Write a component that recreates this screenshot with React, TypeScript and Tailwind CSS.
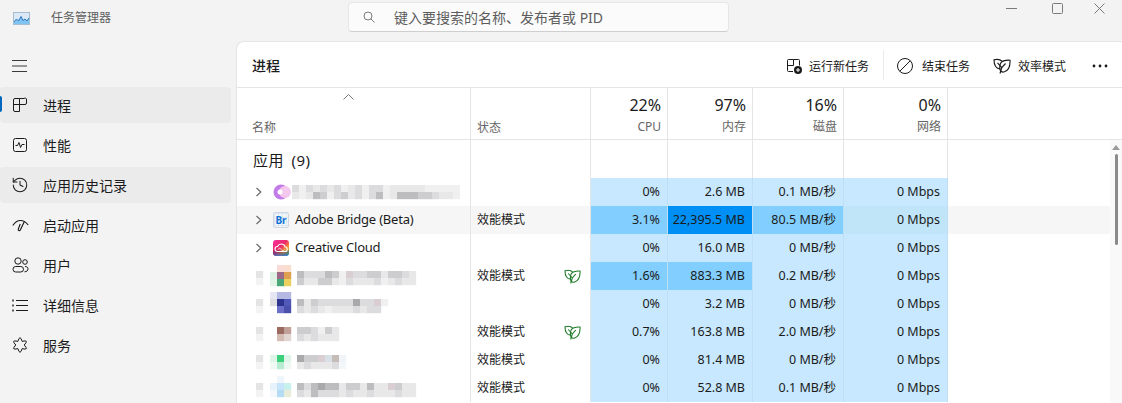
import React from "react";
import { History } from "lucide-react";

const L = "bg-[#c7e8fe]";
const M = "bg-[#82cfff]";
const H = "bg-[#0090f5]";
const N = "bg-[#c0e4f8]";

type Cell = { v: string; bg?: string };

function Leaf({ className }: { className: string }) {
  return (
    <svg viewBox="0 0 18 16" fill="none" stroke="currentColor" strokeWidth="1.150" className={className}>
      <path d="M7.500 10.800C3.200 11 1 7.500 1 1.800c3-.8 6-.8 8.200 1.600" />
      <path d="M7.600 5.200C9 3 12.500 2 17 2.200c.3 5-1 10-5.600 11.600-2.300.8-4.400-.4-4.600-3.300-.1-2 .1-3.800.8-5.300z" />
      <path d="M4.500 4.800 8.800 9.600M12.500 5.500 8.800 9.600 7 15.500" />
    </svg>
  );
}

function Cells({ x, y, rows }: { x: number; y: number; rows: string[][] }) {
  return (
    <>
      {rows.map((r, j) =>
        r.map((c, i) => (c ? <rect key={`${j}-${i}`} x={x + i * 7} y={y + j * 7} width="7.2" height="7.2" fill={c} /> : null)),
      )}
    </>
  );
}

const g1 = "#cdcdd0", g2 = "#dcdcde", g3 = "#e8e8e9", g4 = "#f0f0f1", g5 = "#bdbdc0", g6 = "#a9a9ac", p1 = "#d9cfd3", b1 = "#d8e0e6";

type Blur = { rows: { x: number; y: number; rows: string[][] }[] };

const exp = (y: number) => ({ x: 256 - 254, y, rows: [["#e4e4e4"], ["#f3f3f3"]] });

function BlurRow({ rows }: Blur) {
  return (
    <svg width="216" height="28" viewBox="0 0 216 28" className="shrink-0 blur-[0.6px]">
      {rows.map((r, i) => (
        <Cells key={i} {...r} />
      ))}
    </svg>
  );
}

const blurred: Record<string, Blur> = {
  r4: {
    rows: [
      exp(9),
      { x: 16, y: 3, rows: [["", "#f9dcd6", "#f9ded0"], ["#dff1e2", "#9c6a88", "#dfa050"], ["#e3f3e6", "#4aa878", "#ecd060"]] },
      {
        x: 43,
        y: 9,
        rows: [
          [g5, g2, g2, g2, g5, g1, g4, p1, g2, g2, g1, g1, g3, g1, g1, g2, g3],
          [g1, g3, g3, g1, g1, g3, g4, g2, g3, g3, g3, g2, g4, g3, g2, g3, g3],
        ],
      },
    ],
  },
  r5: {
    rows: [
      exp(9),
      { x: 16, y: 2, rows: [["#e6e7f5", "#b4b8e2", "#b4b8e2"], ["#dddde2", "#2c3490", "#5058b8"], ["", "#6c70c8", "#4a50ac"]] },
      {
        x: 43,
        y: 9,
        rows: [
          [g5, g3, g1, g2, g2, g2, g2, g2, g6, g2, g2, p1, g4],
          [g2, g3, g2, g3, g4, g3, g3, g3, g2, g3, g2, g2, ""],
        ],
      },
    ],
  },
  r6: {
    rows: [
      exp(9),
      { x: 23, y: 9, rows: [["#9a6a60", "#c0a098"], ["#d4bcb4", "#e2d6d2"]] },
      { x: 43, y: 9, rows: [[g1, g1, g2, g4, g1, g3], [g2, g3, g2, g3, g3, g3]] },
    ],
  },
  r7: {
    rows: [
      exp(9),
      { x: 16, y: 9, rows: [["#dff5e8", "#3dd07a", "#e0f5ea"], ["#f0f9f4", "#b8ecd0", "#eef8f2"]] },
      { x: 43, y: 9, rows: [[g6, g1, g1, p1, b1, "#c5bcb8", "#f0f4f9"], [g3, g2, g3, g3, g3, g2, "#f4f7fa"]] },
    ],
  },
  r8: {
    rows: [
      exp(9),
      { x: 16, y: 2, rows: [["", "#eef6fc", ""], ["#e6f2fc", "#c8e4fa", "#c8f0ec"], ["#f4f8fc", "#b4dcf4", "#e8ecd8"]] },
      {
        x: 43,
        y: 9,
        rows: [
          [g5, g2, g5, g6, g5, g5, g3, g1, g1, g3, g5, g3, g3, p1, g1, g3, g3],
          [g2, g3, g5, g2, g2, g2, g3, g2, g3, g3, g2, g3, g3, g3, g2, g3, g3],
        ],
      },
    ],
  },
};

const rows: {
  key: string;
  status?: string;
  leaf?: boolean;
  hover?: boolean;
  cells: Cell[];
}[] = [
  { key: "r1", cells: [{ v: "0%" }, { v: "2.6 MB" }, { v: "0.1 MB/秒" }, { v: "0 Mbps" }] },
  { key: "r2", hover: true, status: "效能模式", cells: [{ v: "3.1%", bg: M }, { v: "22,395.5 MB", bg: H }, { v: "80.5 MB/秒", bg: M }, { v: "0 Mbps", bg: N }] },
  { key: "r3", cells: [{ v: "0%" }, { v: "16.0 MB" }, { v: "0 MB/秒" }, { v: "0 Mbps" }] },
  { key: "r4", status: "效能模式", leaf: true, cells: [{ v: "1.6%", bg: M }, { v: "883.3 MB", bg: M }, { v: "0.2 MB/秒" }, { v: "0 Mbps" }] },
  { key: "r5", cells: [{ v: "0%" }, { v: "3.2 MB" }, { v: "0 MB/秒" }, { v: "0 Mbps" }] },
  { key: "r6", status: "效能模式", leaf: true, cells: [{ v: "0.7%" }, { v: "163.8 MB" }, { v: "2.0 MB/秒" }, { v: "0 Mbps" }] },
  { key: "r7", status: "效能模式", cells: [{ v: "0%" }, { v: "81.4 MB" }, { v: "0 MB/秒" }, { v: "0 Mbps" }] },
  { key: "r8", status: "效能模式", cells: [{ v: "0%" }, { v: "52.8 MB" }, { v: "0.1 MB/秒" }, { v: "0 Mbps" }] },
];

function Chevron() {
  return (
    <svg width="8" height="10" viewBox="0 0 8 10" fill="none" stroke="#6a6a6a" strokeWidth="1.200" className="shrink-0">
      <path d="M1.500 1 5.800 5 1.500 9" />
    </svg>
  );
}

function RowName({ id }: { id: string }) {
  if (id === "r1") {
    return (
      <div className="flex items-center pl-[18px]">
        <Chevron />
        <svg width="18" height="16" viewBox="0 0 18 16" className="ml-[10px] blur-[0.3px]">
          <circle cx="8" cy="8" r="7.500" fill="#c27be8" />
          <circle cx="12" cy="8" r="6" fill="#f4c8ee" />
          <circle cx="7" cy="8" r="2.500" fill="#fff" />
        </svg>
        <svg width="172" height="16" viewBox="0 0 172 16" className="ml-[-3px] blur-[0.6px]">
          <Cells x={4} y={1} rows={[[g2, g4, g2, g3, g2, g3, g2, g4, g3, g2, g4, g2, g2, g4, g3, g3, g3, g3, g3, g4, g4, g4, g4, g4]]} />
          <Cells x={4} y={8} rows={[[g3, g4, g3, g5, g1, g4, g2, g1, g3, g2, g4, g2, g5, g4, g3, g5, g5, g5, g1, g1, g2, g3, g3, g4]]} />
        </svg>
      </div>
    );
  }
  if (id === "r2") {
    return (
      <div className="flex items-center pl-[18px]">
        <Chevron />
        <div className="relative ml-[10px] flex h-4 w-4 items-center justify-center rounded-[2px] border border-[#cfd8e2] bg-[linear-gradient(#dce8f6_1px,transparent_1px),linear-gradient(90deg,#dce8f6_1px,transparent_1px)] bg-[size:4px_4px] text-[10px] leading-none font-bold text-[#1473d6]">
          Br
        </div>
        <span className="ml-[6px] tracking-[-0.2px] text-[#1b1b1b]">Adobe Bridge (Beta)</span>
      </div>
    );
  }
  if (id === "r3") {
    return (
      <div className="flex items-center pl-[18px]">
        <Chevron />
        <svg width="16" height="16" viewBox="0 0 16 16" className="ml-[10px]">
          <defs>
            <linearGradient id="cc" x1="0" y1="0" x2="1" y2="1">
              <stop offset="0" stopColor="#ff2f9e" />
              <stop offset="0.45" stopColor="#e8286a" />
              <stop offset="0.7" stopColor="#ff9a2e" />
              <stop offset="1" stopColor="#39c4a8" />
            </linearGradient>
            <linearGradient id="cc2" x1="0" y1="0" x2="0" y2="1">
              <stop offset="0.55" stopColor="#000" stopOpacity="0" />
              <stop offset="1" stopColor="#2a6fe8" stopOpacity="0.8" />
            </linearGradient>
          </defs>
          <rect width="16" height="16" rx="3" fill="url(#cc)" />
          <rect width="16" height="16" rx="3" fill="url(#cc2)" />
          <path d="M4.500 11.500C2.800 11.500 2 10.300 2 9c0-1.500 1.100-2.500 2.500-2.500C5.200 5 6.500 4 8.200 4c2 0 3.400 1.200 3.800 2.800 1.300.1 2.200 1.100 2.200 2.400 0 1.300-1 2.300-2.400 2.300z" fill="none" stroke="#fff" strokeWidth="1.100" />
          <path d="M5 9.500c1.500-2.500 3-.5 3.500.5s2 1 3-.5" fill="none" stroke="#fff" strokeWidth="0.800" />
        </svg>
        <span className="ml-[6px] tracking-[-0.25px] text-[#1b1b1b]">Creative Cloud</span>
      </div>
    );
  }
  return (
    <div className="pl-[17px]">
      <BlurRow {...blurred[id]} />
    </div>
  );
}

const ico = "shrink-0 text-[#1b1b1b]";

const navItems: { label: string; active?: boolean; soft?: boolean; icon: React.ReactNode }[] = [
  {
    label: "进程",
    active: true,
    soft: true,
    icon: (
      <svg width="16" height="16" viewBox="0 0 16 16" fill="none" stroke="currentColor" className={ico}>
        <path d="M7.500 1.500H3A1.500 1.500 0 0 0 1.500 3v10A1.500 1.500 0 0 0 3 14.500h4.500zM7.500 1.500H12A1.500 1.500 0 0 1 14.500 3v3a1.500 1.500 0 0 1-1.500 1.500H1.500" />
      </svg>
    ),
  },
  {
    label: "性能",
    icon: (
      <svg width="16" height="16" viewBox="0 0 16 16" fill="none" stroke="currentColor" className={ico}>
        <rect x="1.500" y="1.500" width="13" height="13" rx="2" />
        <path d="M3.500 8.500H5.500L7 5.500 8.500 10.500 10 7.500H12.500" />
      </svg>
    ),
  },
  {
    label: "应用历史记录",
    soft: true,
    icon: <History size={18} strokeWidth={1.35} className={`-ml-[1px] ${ico}`} />,
  },
  {
    label: "启动应用",
    icon: (
      <svg width="17" height="13" viewBox="0 0 17 13" fill="none" stroke="currentColor" className={ico}>
        <path d="M.8 6.500C3 3 5.500 1.500 8.500 1.500s5.500 1.500 7.700 4.500" strokeWidth="1.100" />
        <path d="M12.500 2.300 8.300 11a1.100 1.100 0 0 1-2-.9L8.200 5" strokeWidth="1.200" />
      </svg>
    ),
  },
  {
    label: "用户",
    icon: (
      <svg width="17" height="16" viewBox="0 0 17 16" fill="none" stroke="currentColor" className={ico}>
        <circle cx="6" cy="4" r="3.200" />
        <circle cx="13" cy="5" r="2.300" />
        <rect x="1" y="9.500" width="10.500" height="5.500" rx="2.700" />
        <path d="M13 9.500c2 0 3 .9 3 2.300 0 1.700-1.200 3-3.500 3" />
      </svg>
    ),
  },
  {
    label: "详细信息",
    icon: (
      <svg width="16" height="14" viewBox="0 0 16 14" fill="none" stroke="currentColor" className={ico}>
        <path d="M4 2.500h12M4 7.500h12M4 12.500h12" />
        <path d="M1 1.500v2M1 6.500v2M1 11.500v2" strokeWidth="1.400" />
      </svg>
    ),
  },
  {
    label: "服务",
    icon: (
      <svg width="16" height="16" viewBox="0 0 16 16" fill="none" stroke="currentColor" className={ico}>
        <path d="M5.900 4.360Q8-3 10.100 4.360 17.500 2.500 12.200 8 17.500 13.500 10.100 11.640 8 19 5.900 11.640-1.500 13.500 3.800 8-1.500 2.500 5.900 4.360z" strokeLinejoin="round" />
      </svg>
    ),
  },
];

export default function App() {
  return (
    <div className="relative flex h-[403px] w-[1122px] flex-col overflow-hidden bg-[#f3f3f3] font-['Noto_Sans','Noto_Sans_CJK_SC',sans-serif] text-[13px] text-[#1b1b1b]">
      {/* title bar */}
      <header className="flex h-[41px] shrink-0 items-start">
        <div className="flex w-[348px] shrink-0 items-center pt-[11px] pl-[13px]">
          <svg width="17" height="13" viewBox="0 0 17 13" className="shrink-0">
            <rect x="0.500" y="0.500" width="16" height="12" fill="#dbe9f6" stroke="#a8bcd0" />
            <path d="M1 10 3.500 7 5.500 9 8 4.500 10 8.500 12 7 14 9 16 6V12H1z" fill="#7fc4f0" />
            <path d="M1 10 3.500 7 5.500 9 8 4.500 10 8.500 12 7 14 9 16 6" fill="none" stroke="#2f78c4" />
          </svg>
          <span className="ml-[21px] text-[12px] leading-[14px] text-[#5f5f5f]">任务管理器</span>
        </div>
        <div className="mt-[2px] flex h-[30px] w-[381px] items-center rounded-[4px] border border-[#e6e6e6] border-b-[#cfcfcf] bg-[#fbfbfb] pl-[14px] text-[14px] text-[#5d5d5d]">
          <svg width="12" height="12" viewBox="0 0 12 12" fill="none" stroke="#7c7c7c" className="shrink-0">
            <circle cx="5" cy="5" r="4" />
            <path d="m8 8 3.500 3.500" />
          </svg>
          <span className="ml-[19px]">键入要搜索的名称、发布者或 PID</span>
        </div>
        <div className="ml-auto flex text-[#7a7a7a]">
          <div className="flex h-4 w-[45px] items-center justify-center">
            <svg width="11" height="16" viewBox="0 0 11 16" stroke="currentColor"><path d="M0 8.500h11" /></svg>
          </div>
          <div className="flex h-4 w-[46px] items-center justify-center">
            <svg width="11" height="11" viewBox="0 0 11 11" fill="none" stroke="currentColor"><rect x="0.500" y="0.500" width="10" height="10" rx="1" /></svg>
          </div>
          <div className="flex h-4 w-[42px] items-center justify-center pr-[4px]">
            <svg width="11" height="11" viewBox="0 0 11 11" fill="none" stroke="currentColor"><path d="M.5.500l10 10M10.500.500l-10 10" /></svg>
          </div>
        </div>
      </header>

      <div className="flex min-h-0 flex-1">
        {/* sidebar */}
        <nav className="w-[236px] shrink-0">
          <div className="flex h-[46px] items-center pl-[12px]">
            <svg width="15" height="12" viewBox="0 0 15 12" stroke="#3a3a3a" className="mt-[3px]">
              <path d="M0 .5h15M0 6h15M0 11.500h15" />
            </svg>
          </div>
          <ul className="flex flex-col gap-1">
            {navItems.map((n) => (
              <li key={n.label} className={`relative flex h-9 w-[231px] items-center rounded-[4px] pl-[12px] text-[14px] ${n.soft ? "bg-[#ebebeb]" : ""}`}>
                {n.active && <span className="absolute top-[9px] left-0 h-4 w-[2px] rounded-r-sm bg-[#0067c0]" />}
                <span className="flex w-[31px] items-center">{n.icon}</span>
                <span>{n.label}</span>
              </li>
            ))}
          </ul>
        </nav>

        {/* main */}
        <main className="relative min-w-0 flex-1 overflow-hidden rounded-tl-lg border-t border-l border-[#e5e5e5] bg-white">
          <div className="flex h-[46px] items-center border-b border-[#e5e5e5] text-[12px]">
            <h1 className="pt-[1px] pl-[15px] text-[14px] font-medium">进程</h1>
            <div className="ml-auto flex items-center pt-[3px]">
              <svg width="16" height="16" viewBox="0 0 16 16" fill="none" stroke="#1b1b1b" className="shrink-0">
                <path d="M7.500 1.500H2.500a1 1 0 0 0-1 1v10a1 1 0 0 0 1 1H7M7.500 1.500v6h-6M7.500 1.500h5a1 1 0 0 1 1 1v5" />
                <circle cx="12" cy="12" r="4" fill="#1b1b1b" stroke="none" />
                <path d="M10 12h4M12 10v4" stroke="#fff" />
              </svg>
              <span className="ml-[7px] pt-[1px]">运行新任务</span>
              <span className="mr-[13px] ml-[14px] -mt-[2px] h-[30px] w-px bg-[#ebebeb]" />
              <svg width="16" height="16" viewBox="0 0 16 16" fill="none" stroke="#1b1b1b" className="shrink-0">
                <circle cx="8" cy="8" r="7.500" />
                <path d="M13.300 2.700 2.700 13.300" />
              </svg>
              <span className="ml-[9px] pt-[1px]">结束任务</span>
              <Leaf className="ml-[23px] h-4 w-[18px] text-[#1b1b1b]" />
              <span className="ml-[7px] pt-[1px]">效率模式</span>
              <svg width="16" height="4" viewBox="0 0 16 4" fill="#1b1b1b" className="mr-[14px] ml-[26px]">
                <circle cx="2" cy="2" r="1.400" />
                <circle cx="8" cy="2" r="1.400" />
                <circle cx="14" cy="2" r="1.400" />
              </svg>
            </div>
          </div>

          {/* table header */}
          <div className="grid h-[52px] grid-cols-[234px_120px_77px_85px_91px_104px_1fr] border-b border-[#e5e5e5] text-[12px] text-[#666]">
            <div className="relative flex items-end border-r border-[#e5e5e5] pb-[2px] pl-[15px]">
              <svg width="11" height="6" viewBox="0 0 11 6" fill="none" stroke="#777" className="absolute top-[6px] left-[106px]">
                <path d="M.5 5.500 5.500.5l5 5" />
              </svg>
              名称
            </div>
            <div className="flex items-end border-r border-[#e5e5e5] pb-[2px] pl-[6px]">状态</div>
            {[
              ["22%", "CPU"],
              ["97%", "内存"],
              ["16%", "磁盘"],
              ["0%", "网络"],
            ].map(([a, b]) => (
              <div key={b} className="flex flex-col items-end border-r border-[#e5e5e5] pr-[6px]">
                <span className="mt-[5px] text-[16px] leading-[24px] text-[#1b1b1b]">{a}</span>
                <span className="mt-[1px] leading-[18px]">{b}</span>
              </div>
            ))}
            <div />
          </div>

          {/* group row */}
          <div className="grid h-[38px] grid-cols-[234px_120px_77px_85px_91px_104px_1fr]">
            <div className="flex items-center border-r border-[#e5e5e5] pt-[2px] pl-[16px] text-[15px] tracking-[0.5px] [word-spacing:3px] text-[#1b1b1b]">应用 (9)</div>
            <div className="border-r border-[#e5e5e5]" />
            <div className="border-r border-[#e5e5e5]" />
            <div className="border-r border-[#e5e5e5]" />
            <div className="border-r border-[#e5e5e5]" />
            <div className="border-r border-[#e5e5e5]" />
          </div>

          {/* rows */}
          {rows.map((r) => (
            <div key={r.key} className={`grid h-7 grid-cols-[234px_120px_77px_85px_91px_104px_1fr] items-stretch ${r.hover ? "bg-[#f6f6f6]" : ""}`}>
              <div className="flex items-center border-r border-[#e5e5e5]">
                <RowName id={r.key} />
              </div>
              <div className="flex items-center justify-between border-r border-[#e5e5e5] pr-[9px] pl-[6px] text-[12px]">
                <span>{r.status}</span>
                {r.leaf && <Leaf className="h-[15px] w-[17px] text-[#1f7a2a]" />}
              </div>
              {r.cells.map((c, i) => (
                <div key={i} className={`flex items-center justify-end border-r border-[#bcdff5] pr-[7px] text-[12.5px] ${c.bg ?? L}`}>
                  {c.v}
                </div>
              ))}
            </div>
          ))}

          {/* scrollbar */}
          <div className="absolute top-[98px] right-0 bottom-0 w-3 bg-[#f9f9f9]">
            <svg width="8" height="5" viewBox="0 0 8 5" fill="#9a9a9a" className="absolute top-[5px] left-[2px]">
              <path d="M4 0 8 5H0z" />
            </svg>
            <div className="absolute top-[14px] left-[5px] h-[91px] w-[3px] rounded-full bg-[#8a8a8a]" />
          </div>
        </main>
      </div>
    </div>
  );
}
